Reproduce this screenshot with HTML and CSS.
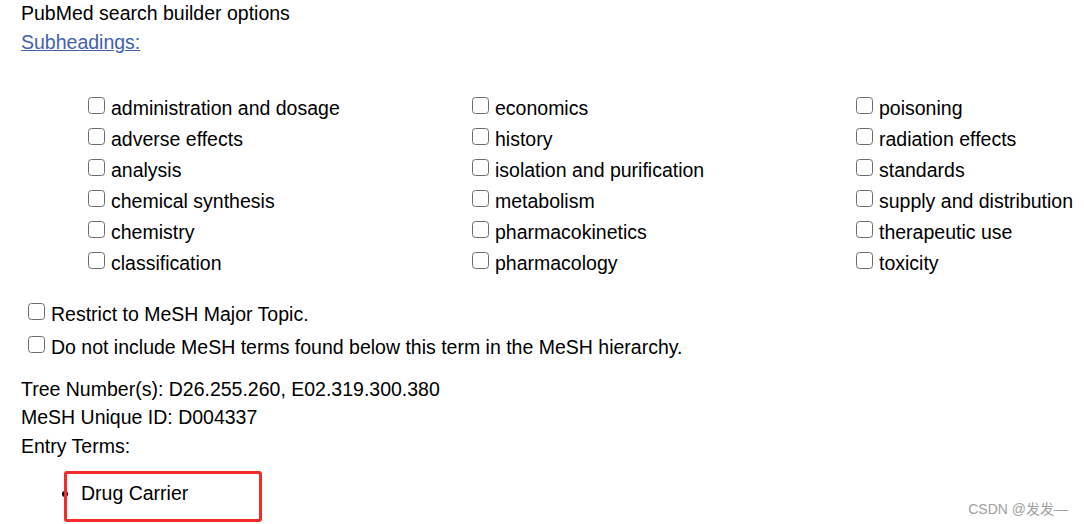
FILE: index.html
```html
<!DOCTYPE html>
<html lang="en">
<head>
<meta charset="utf-8">
<title>PubMed search builder options</title>
<link rel="stylesheet" href="styles.css">
</head>
<body>
<main class="page">
  <div class="title">PubMed search builder options</div>
  <div class="subhead"><a href="#" class="link">Subheadings:</a></div>

  <div class="grid">
    <label class="opt"><span class="box"></span>administration and dosage</label>
    <label class="opt"><span class="box"></span>adverse effects</label>
    <label class="opt"><span class="box"></span>analysis</label>
    <label class="opt"><span class="box"></span>chemical synthesis</label>
    <label class="opt"><span class="box"></span>chemistry</label>
    <label class="opt"><span class="box"></span>classification</label>
    <label class="opt"><span class="box"></span>economics</label>
    <label class="opt"><span class="box"></span>history</label>
    <label class="opt"><span class="box"></span>isolation and purification</label>
    <label class="opt"><span class="box"></span>metabolism</label>
    <label class="opt"><span class="box"></span>pharmacokinetics</label>
    <label class="opt"><span class="box"></span>pharmacology</label>
    <label class="opt"><span class="box"></span>poisoning</label>
    <label class="opt"><span class="box"></span>radiation effects</label>
    <label class="opt"><span class="box"></span>standards</label>
    <label class="opt"><span class="box"></span>supply and distribution</label>
    <label class="opt"><span class="box"></span>therapeutic use</label>
    <label class="opt"><span class="box"></span>toxicity</label>
  </div>

  <div class="restrict">
    <label class="ropt"><span class="box"></span>Restrict to MeSH Major Topic.</label>
    <label class="ropt"><span class="box"></span>Do not include MeSH terms found below this term in the MeSH hierarchy.</label>
  </div>

  <div class="info">
    <div>Tree Number(s): D26.255.260, E02.319.300.380</div>
    <div>MeSH Unique ID: D004337</div>
    <div>Entry Terms:</div>
  </div>

  <ul class="terms">
    <li>Drug Carrier</li>
  </ul>

  <div class="highlight"></div>
</main>
<div class="watermark">CSDN @发发—</div>
</body>
</html>
```

FILE: styles.css
```css
html, body {
  margin: 0;
  padding: 0;
  background: #ffffff;
}

body {
  width: 1084px;
  height: 524px;
  overflow: hidden;
  position: relative;
  font-family: "Liberation Sans", Arial, sans-serif;
  font-size: 19.5px;
  color: #000000;
}

.page {
  padding-left: 21px;
}

.title {
  line-height: 27px;
}

.subhead {
  line-height: 27px;
  margin-top: 2px;
}

.link {
  color: #4262ab;
  text-decoration: underline;
}

.grid {
  margin-top: 36.5px;
  margin-left: 66px;
  display: grid;
  grid-template-columns: 384px 384px auto;
  grid-template-rows: repeat(6, 31px);
  grid-auto-flow: column;
}

.opt, .ropt {
  display: block;
  white-space: nowrap;
  line-height: 31px;
}

.box {
  display: inline-block;
  box-sizing: border-box;
  width: 17px;
  height: 17px;
  border: 1.5px solid #6c6c6c;
  border-radius: 3.5px;
  background: #ffffff;
  margin-left: 0.5px;
  margin-right: 6.5px;
  vertical-align: 1px;
}

.restrict {
  margin-top: 19.5px;
  margin-left: 6px;
}

.ropt {
  line-height: 33px;
}

.info {
  margin-top: 10.75px;
  line-height: 28.5px;
}

.terms {
  margin: 18.5px 0 0 0;
  padding-left: 60px;
  line-height: 28.5px;
  list-style: disc;
}

.highlight {
  position: absolute;
  left: 64px;
  top: 471px;
  width: 198px;
  height: 51px;
  box-sizing: border-box;
  border: 3px solid #f52a2a;
  border-radius: 3px;
}

.watermark {
  position: absolute;
  right: 16px;
  bottom: 6px;
  font-family: "Liberation Sans", "Noto Sans CJK SC", sans-serif;
  font-size: 14px;
  line-height: 18px;
  color: #a0a0a0;
}
```
